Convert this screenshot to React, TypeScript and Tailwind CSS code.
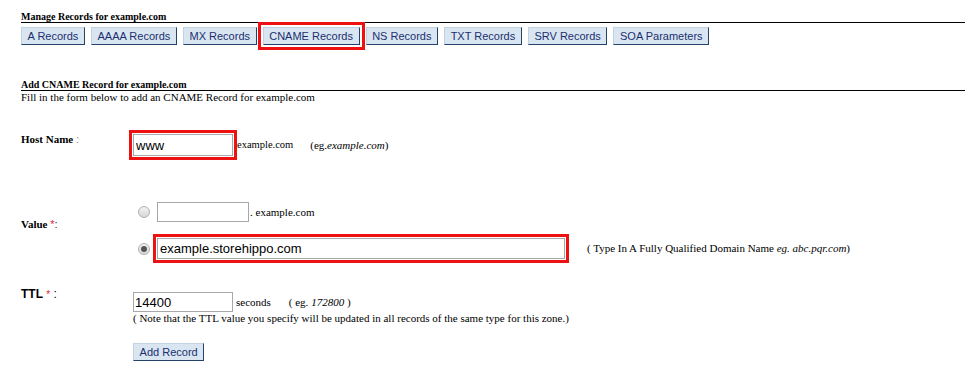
const serif = "font-['Liberation_Serif',serif]";
const sans = "font-['Liberation_Sans',sans-serif]";

function Btn({ label, active }: { label: string; active?: boolean }) {
  return (
    <button
      className={
        "h-[18px] px-[5.6px] bg-[#d9e6f2] border border-[#c3d2e0] border-r-[#24436a] border-b-[#24436a] text-[#1b2f6e] text-[11px] leading-[16px] font-['Liberation_Sans',sans-serif] " +
        (active ? "outline-3 outline-offset-2 outline-[#ee1111]" : "")
      }
    >
      {label}
    </button>
  );
}

function Radio({ checked }: { checked?: boolean }) {
  return (
    <div className="w-[12px] h-[12px] rounded-full border border-[#b0b0b0] bg-gradient-to-b from-[#f4f4f4] to-[#d6d6d6] flex items-center justify-center">
      {checked && <div className="w-[6px] h-[6px] rounded-full bg-[#555]" />}
    </div>
  );
}

export default function App() {
  return (
    <div className={`w-[965px] h-[367px] overflow-hidden bg-white text-black pl-[21px] ${serif}`}>
      <div className="pt-[11px]">
        <div className="text-[10px] leading-[11px] font-bold border-b border-black">Manage Records for example.com</div>
        <div className="mt-[4px] flex gap-[6px]">
          <Btn label="A Records" />
          <Btn label="AAAA Records" />
          <Btn label="MX Records" />
          <Btn label="CNAME Records" active />
          <Btn label="NS Records" />
          <Btn label="TXT Records" />
          <Btn label="SRV Records" />
          <Btn label="SOA Parameters" />
        </div>
      </div>

      <div className="mt-[34px] text-[10px] leading-[11px] font-bold border-b border-black">Add CNAME Record for example.com</div>
      <div className="text-[11px] leading-[12px]">Fill in the form below to add an CNAME Record for example.com</div>

      {/* Host Name */}
      <div className="mt-[31px] flex">
        <div className="w-[112px] text-[11px] leading-[10px] font-bold">
          Host Name <span className={`font-normal text-[#888] ${sans}`}>:</span>
        </div>
        <div className="flex items-center text-[10.5px]">
          <input
            readOnly
            value="www"
            className={`w-[100px] h-[22px] px-[2px] border border-[#a8a8a8] text-[13px] text-black ${sans} outline-3 outline-offset-1 outline-[#ee1111]`}
          />
          <span className="ml-[4px]">example.com</span>
          <span className="ml-[17px] text-[11px]">
            (eg.<i>example.com</i>)
          </span>
        </div>
      </div>

      {/* Value */}
      <div className="mt-[46px] flex">
        <div className="w-[112px] text-[11px] leading-[12px] font-bold pt-[16px]">
          Value <span className={`text-[#e0242a] font-normal ${sans}`}>*</span>
          <span className={`font-normal text-[#1b2f6e] ${sans}`}>:</span>
        </div>
        <div className="flex flex-col gap-[16px]">
          <div className="flex items-center">
            <div className="ml-[5px] mr-[7px]">
              <Radio />
            </div>
            <input readOnly value="" className={`w-[92px] h-[20px] px-[2px] border border-[#a8a8a8] text-[13px] ${sans}`} />
            <span className="ml-[1px] text-[11px]">. example.com</span>
          </div>
          <div className="flex items-center">
            <div className="ml-[5px] mr-[7px]">
              <Radio checked />
            </div>
            <input
              readOnly
              value="example.storehippo.com"
              className={`w-[408px] h-[21px] px-[2px] border border-[#a8a8a8] text-[13px] text-black ${sans} outline-3 outline-offset-1 outline-[#ee1111]`}
            />
            <span className="ml-[22px] text-[11px]">
              ( Type In A Fully Qualified Domain Name <i>eg. abc.pqr.com</i>)
            </span>
          </div>
        </div>
      </div>

      {/* TTL */}
      <div className="mt-[28px] flex">
        <div className={`w-[112px] text-[12px] leading-[14px] ${sans}`}>
          <span className="font-bold">TTL</span> <span className="text-[#e0242a] text-[10px]">*</span> :
        </div>
        <div className="pt-[5px] flex flex-col">
          <div className="flex items-center text-[11px]">
            <input readOnly value="14400" className={`w-[100px] h-[20px] px-[1px] border border-[#a8a8a8] text-[13px] text-black ${sans}`} />
            <span className="ml-[3px]">seconds</span>
            <span className="ml-[18px]">
              ( eg. <i>172800</i> )
            </span>
          </div>
          <div className="text-[11px] leading-[12px]">
            ( Note that the TTL value you specify will be updated in all records of the same type for this zone.)
          </div>
          <div className="mt-[15px]">
            <Btn label="Add Record" />
          </div>
        </div>
      </div>
    </div>
  );
}
